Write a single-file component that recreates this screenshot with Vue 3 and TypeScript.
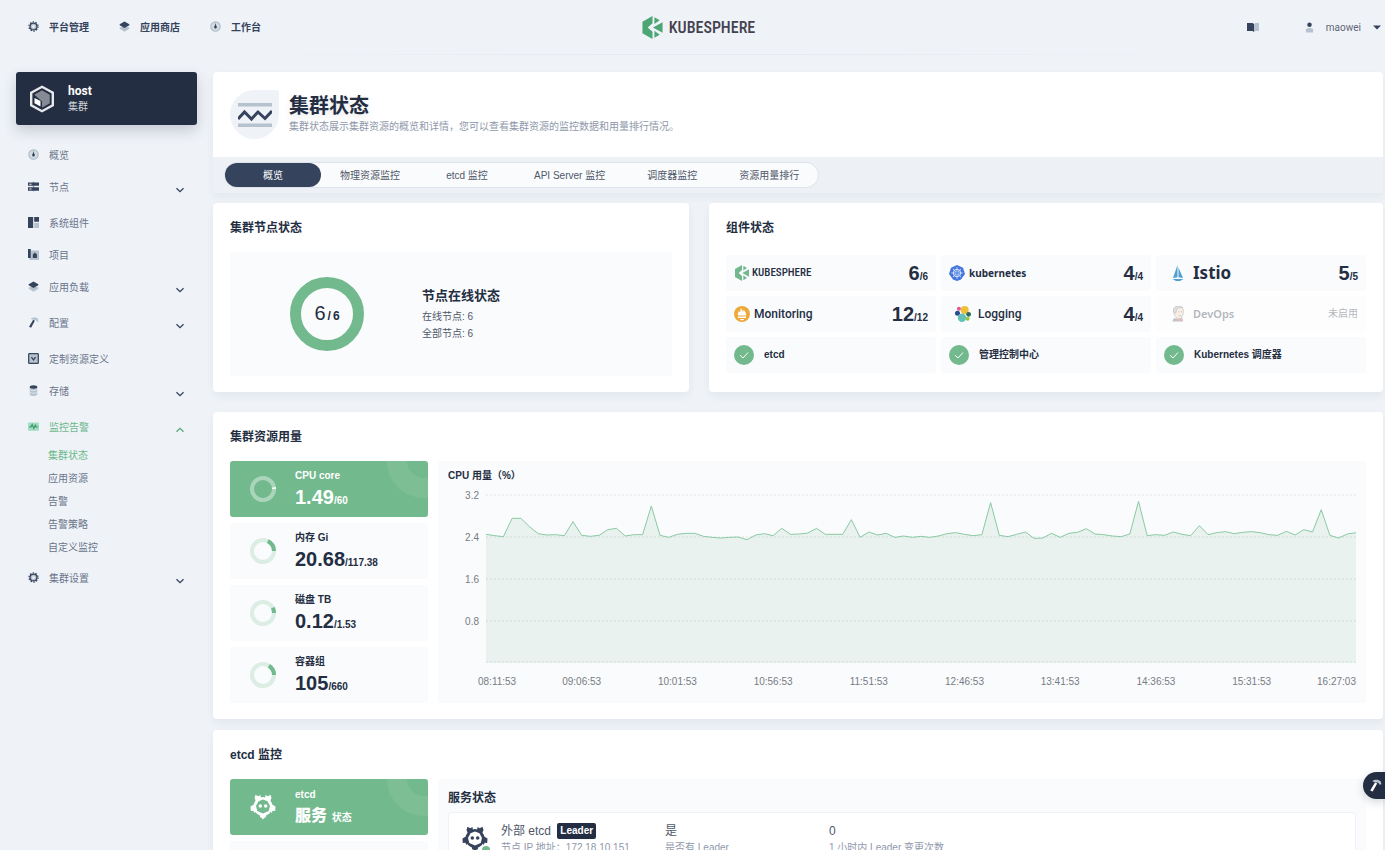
<script setup lang="ts">
interface NavItem {
  label: string
  icon: string
  expandable?: boolean
  active?: boolean
  children?: string[]
}

interface Resource {
  title: string
  value: string
  total: string
  ratio: number
}

interface Tick {
  label: string
  x: string
  anchor: 'start' | 'middle' | 'end'
  dx: number
}

const topNav = [
  { label: '平台管理', icon: 'gear' },
  { label: '应用商店', icon: 'layers' },
  { label: '工作台', icon: 'gauge' },
]

const sideNav: NavItem[] = [
  { label: '概览', icon: 'gauge' },
  { label: '节点', icon: 'nodes', expandable: true },
  { label: '系统组件', icon: 'components' },
  { label: '项目', icon: 'project' },
  { label: '应用负载', icon: 'layers', expandable: true },
  { label: '配置', icon: 'hammer', expandable: true },
  { label: '定制资源定义', icon: 'crd' },
  { label: '存储', icon: 'storage', expandable: true },
  {
    label: '监控告警',
    icon: 'monitor',
    expandable: true,
    active: true,
    children: ['集群状态', '应用资源', '告警', '告警策略', '自定义监控'],
  },
  { label: '集群设置', icon: 'gear', expandable: true },
]

const tabs = ['概览', '物理资源监控', 'etcd 监控', 'API Server 监控', '调度器监控', '资源用量排行']

const services = [
  { key: 'kubesphere', name: 'KUBESPHERE', ready: '6', total: '6' },
  { key: 'kubernetes', name: 'kubernetes', ready: '4', total: '4' },
  { key: 'istio', name: 'Istio', ready: '5', total: '5' },
  { key: 'monitoring', name: 'Monitoring', ready: '12', total: '12' },
  { key: 'logging', name: 'Logging', ready: '4', total: '4' },
  { key: 'devops', name: 'DevOps', ready: '', total: '' },
]

const healthy = ['etcd', '管理控制中心', 'Kubernetes 调度器']

const resources: Resource[] = [
  { title: 'CPU core', value: '1.49', total: '60', ratio: 0.025 },
  { title: '内存 Gi', value: '20.68', total: '117.38', ratio: 0.176 },
  { title: '磁盘 TB', value: '0.12', total: '1.53', ratio: 0.078 },
  { title: '容器组', value: '105', total: '660', ratio: 0.159 },
]

const ringLength = 2 * Math.PI * 11
const ringDash = (ratio: number): string => `${ringLength * ratio} ${ringLength}`

/* Distance of every sample below the top of the plot; the plot is 504 units high. */
const samples: number[] = [
  118, 122, 125, 70, 70, 95, 116, 120, 119, 122, 80, 121, 124, 121, 104, 100, 123, 119, 119, 33,
  121, 127, 118, 115, 115, 124, 127, 129, 127, 126, 134, 120, 116, 122, 100, 118, 117, 114, 100,
  118, 118, 118, 74, 127, 111, 120, 115, 127, 123, 127, 124, 127, 123, 116, 113, 118, 122, 119,
  23, 121, 125, 118, 111, 130, 129, 115, 127, 115, 112, 101, 117, 119, 123, 125, 117, 19, 122,
  119, 121, 111, 118, 122, 92, 119, 113, 110, 116, 112, 110, 113, 119, 121, 109, 120, 104, 111,
  44, 121, 129, 117, 113,
]
const linePoints = samples.map((y, i) => `${i},${y}`).join(' ')
const areaPoints = `0,504 ${linePoints} 100,504`

const yTicks = [
  { label: '3.2', y: 1 },
  { label: '2.4', y: 43 },
  { label: '1.6', y: 85 },
  { label: '0.8', y: 127 },
  { label: '', y: 168 },
]

const xTicks: Tick[] = [
  { label: '08:11:53', x: '0%', anchor: 'start', dx: -8 },
  ...['09:06:53', '10:01:53', '10:56:53', '11:51:53', '12:46:53', '13:41:53', '14:36:53', '15:31:53'].map(
    (label, i): Tick => ({ label, x: `${(i + 1) * 11}%`, anchor: 'middle', dx: 0 }),
  ),
  { label: '16:27:03', x: '100%', anchor: 'end', dx: 0 },
]
</script>

<template>
  <svg class="defs" aria-hidden="true">
    <symbol id="gear" viewBox="0 0 16 16">
      <circle cx="8" cy="8" r="5" fill="#b6c2cd" stroke="#36435c" stroke-width="1.8" />
      <circle cx="8" cy="8" r="6.6" fill="none" stroke="#36435c" stroke-width="1.8" stroke-dasharray="2.1 2.047" />
      <circle cx="8" cy="8" r="2" fill="#eff4f9" />
    </symbol>
    <symbol id="layers" viewBox="0 0 16 16">
      <path d="M1 9.5l7-2 7 2v1.800L8 15.500l-7-4.200z" fill="#b6c2cd" />
      <path d="M8 .8l7 3.800v1.600L8 10 1 6.200V4.600z" fill="#36435c" />
    </symbol>
    <symbol id="gauge" viewBox="0 0 16 16">
      <circle cx="8" cy="8" r="6.8" fill="#d3dbe3" stroke="#b0bbc8" stroke-width="1.6" />
      <path d="M8 3l1 4a2 2 0 1 1-2 0z" fill="#36435c" />
    </symbol>
    <symbol id="nodes" viewBox="0 0 16 16">
      <path d="M7 1h2v14H7z" fill="#8b98a8" />
      <path d="M0 2h16v5H0zM0 9h16v5H0z" fill="#36435c" />
      <path d="M2 4h3v1.300H2zM2 11h3v1.300H2z" fill="#eff4f9" />
    </symbol>
    <symbol id="components" viewBox="0 0 16 16">
      <path d="M0 0h7.500v16H0zM9 0h7v7H9z" fill="#36435c" />
      <path d="M9 8.500h7V16H9z" fill="#b6c2cd" />
    </symbol>
    <symbol id="project" viewBox="0 0 16 16">
      <path d="M4 2h12v14H2z" fill="#b6c2cd" />
      <path d="M0 0h4v13H0zM7 8l3-3 3 3v5H7z" fill="#36435c" />
    </symbol>
    <symbol id="hammer" viewBox="0 0 16 16">
      <path d="M7.500 4L10 5.500 4.500 15.500 1.500 14z" fill="#36435c" />
      <path d="M4 2.500C7 .2 12 .3 14.500 3l.8 3.500-2 .5-2-2.500L6 3.800z" fill="#b6c2cd" />
    </symbol>
    <symbol id="crd" viewBox="0 0 16 16">
      <rect x="1" y="1" width="14" height="14" rx="1" fill="#b6c2cd" stroke="#36435c" stroke-width="1.8" />
      <path d="M5 6l3 4 3-4" fill="none" stroke="#36435c" stroke-width="1.8" />
    </symbol>
    <symbol id="storage" viewBox="0 0 16 16">
      <path d="M2.500 3h11v10.500c0 3.300-11 3.300-11 0z" fill="#b6c2cd" />
      <path d="M2.500 6.500c2 2 9 2 11 0M2.500 10.500c2 2 9 2 11 0" fill="none" stroke="#eff4f9" />
      <ellipse cx="8" cy="2.8" rx="5.5" ry="2.5" fill="#36435c" />
    </symbol>
    <symbol id="monitor" viewBox="0 0 16 16">
      <rect y="2" width="16" height="12" rx="1" fill="#a2dcc2" />
      <path d="M2 8.500h2.500L6 5l2.500 6L10.500 6l1.200 2.500H14" fill="none" stroke="#37986a" stroke-width="1.6" />
    </symbol>
    <symbol id="chevron" viewBox="0 0 10 10">
      <path d="M1.500 3.200L5 6.700l3.500-3.500" fill="none" stroke="currentColor" stroke-width="1.3" />
    </symbol>
    <symbol id="kubesphere" viewBox="0 0 21 24">
      <path d="M0 6L10.500 0v7.500L5.500 12l5 4.500V24L0 18z" fill="currentColor" />
      <path d="M12.500 1.200L18 4.400l-5.500 4zM21 6.500v11l-10-5.500zM12.500 15.500l5.500 4-5.500 3.300z" fill="currentColor" />
    </symbol>
    <symbol id="kubernetes" viewBox="0 0 16 16">
      <path d="M8 0l6 2.800L16 9l-4 5.500L8 16l-4-1.500L0 9l2-6.200z" fill="#4576e0" />
      <g fill="none" stroke="#dce7ff" stroke-width="1">
        <circle cx="8" cy="8" r="3.7" />
        <path d="M8 2.200v11.600M2.200 8h11.600M3.900 3.900l8.200 8.200M12.100 3.900l-8.200 8.200" stroke-width=".8" />
      </g>
      <circle cx="8" cy="8" r="1" fill="#4576e0" />
    </symbol>
    <symbol id="istio" viewBox="0 0 16 16">
      <path d="M7.500 0v12.200L3 13zM8.500 2.500l4.500 10.500-4.500-.8z" fill="#4f9fd0" />
      <path d="M2.500 14h11L10 16H6z" fill="#4f9fd0" />
    </symbol>
    <symbol id="monitoring" viewBox="0 0 16 16">
      <circle cx="8" cy="8" r="8" fill="#eda93c" />
      <path d="M4 9.500c-.8-2 .7-3 .8-4.500L6 6.300c.8-1.500.6-3 .6-4.300C8 3 8.300 5 9 6c.5-.6.4-1.500.5-2.200C11 5.500 12.800 7.500 12 9.500zM4 10.500h8V12H4zM6 12.900h4c-.2 1.800-3.800 1.800-4 0z" fill="#fff" />
    </symbol>
    <symbol id="logging" viewBox="0 0 16 16">
      <circle cx="9.7" cy="4" r="4" fill="#efbf38" />
      <circle cx="3.9" cy="2.8" r="2" fill="#e4578f" />
      <circle cx="2.5" cy="7.2" r="2.5" fill="#294a91" />
      <circle cx="7" cy="11.8" r="4.2" fill="#65c0b6" />
      <circle cx="13.6" cy="8.3" r="2.4" fill="#286b5b" />
      <circle cx="12.6" cy="12.8" r="2" fill="#92c83e" />
    </symbol>
    <symbol id="devops" viewBox="0 0 16 18">
      <path d="M3 6c0-8 11-8 11-.5 0 3-.5 6.500-3 8.500H7L4 10z" fill="#f0d6b7" stroke="#34383b" stroke-width=".7" />
      <path d="M3.500 7C1 0 11-2 13 2c-3 0-5 0-6 1L5.500 8z" fill="#aaa" stroke="#34383b" stroke-width=".6" />
      <path d="M1.500 17.500l2-4 5 1.500 4-1.500 1.500 4z" fill="#475a77" />
      <path d="M6.500 14l3 1.500L13 14v3l-3-1-3.500 1z" fill="#d33833" />
      <path d="M8 6.500h1.500M11.200 6.500h1.300M8.500 10.500c1 1 2.500 1 3 0" stroke="#34383b" stroke-width=".8" fill="none" />
    </symbol>
    <symbol id="etcd" viewBox="0 0 26 26">
      <g fill="currentColor">
        <path
          fill-rule="evenodd"
          d="M13 3a9.500 9.500 0 0 1 9.500 9.500A9.500 9.500 0 0 1 13 22a9.500 9.500 0 0 1-9.500-9.500A9.500 9.500 0 0 1 13 3zM13 5.500l-4.500 1.800L6 12l1.300 5L13 19.500l5.700-2.500L20 12l-2.500-4.700z"
        />
        <path d="M5.500.8l2.700 1.400L10.500 1 11 5 6 7.500 4.500 4zM20.500.8l-2.700 1.400L15.500 1 15 5l5 2.500L21.500 4z" />
        <path d="M3.800 10.500L.5 12.500.8 17l2.500-.3L4.500 19l2-3zM22.200 10.500l3.300 2-.3 4.500-2.500-.3-1.200 2.300-2-3z" />
        <path d="M9.500 20h7l-.8 3.500h-1L13 25.500l-1.700-2h-1z" />
        <circle cx="10.300" cy="12" r="1.8" />
        <circle cx="15.700" cy="12" r="1.8" />
      </g>
    </symbol>
  </svg>

  <div class="page">
    <header class="topbar">
      <nav class="top-nav">
        <a v-for="item in topNav" :key="item.label" href="#" class="top-link">
          <svg class="icon"><use :href="'#' + item.icon" /></svg>{{ item.label }}
        </a>
      </nav>
      <a href="#" class="brand">
        <svg class="brand-mark"><use href="#kubesphere" /></svg>
        <span>KUBESPHERE</span>
      </a>
      <div class="account">
        <button type="button" class="plain" aria-label="文档">
          <svg class="book" viewBox="0 0 12 9">
            <path d="M0 0h5.500L7 1v8L5.500 8H0z" fill="#36435c" />
            <path d="M7 1l1.500-1H12v8H8.500L7 9z" fill="#b6c2cd" />
          </svg>
        </button>
        <button type="button" class="plain user">
          <svg class="avatar" viewBox="0 0 10 12">
            <path d="M1 8c2-2 6-2 8 0v3.500H1z" fill="#b6c2cd" />
            <circle cx="5" cy="3" r="2.5" fill="#36435c" />
          </svg>
          maowei
          <svg class="caret" viewBox="0 0 8 5"><path d="M0 .5h8L4 4.500z" fill="#36435c" /></svg>
        </button>
      </div>
    </header>

    <div class="body">
      <aside class="sidebar">
        <button type="button" class="cluster">
          <svg class="cube" viewBox="0 0 26 28">
            <path d="M13 1.800l10.800 6v12.400L13 26.200 2.200 20.200V7.800z" fill="#242e42" stroke="#e6e8ec" stroke-width="2.4" />
            <path d="M13 5.500l7.500 4.200v8.600L13 22.500v-6L5.500 9.700z" fill="#868a94" />
            <path d="M5.500 9.700L13 5.500l7.500 4.200v8.600L13 22.500V15z" fill="#868a94" />
            <path d="M5.500 13l6 3v5.500l-6-3.200z" fill="#fff" />
          </svg>
          <span class="cluster-text"><strong>host</strong><span>集群</span></span>
        </button>
        <nav class="side-nav">
          <div v-for="item in sideNav" :key="item.label" class="group" :class="{ expandable: item.expandable }">
            <a href="#" class="side-link" :class="{ active: item.active }">
              <svg class="icon"><use :href="'#' + item.icon" /></svg>
              <span>{{ item.label }}</span>
              <svg v-if="item.expandable" class="chevron" :class="{ open: item.active }"><use href="#chevron" /></svg>
            </a>
            <div v-if="item.children" class="sub-nav">
              <a v-for="(child, i) in item.children" :key="child" href="#" :class="{ active: i === 0 }">{{ child }}</a>
            </div>
          </div>
        </nav>
      </aside>

      <main class="main">
        <section class="intro">
          <div class="intro-head">
            <div class="badge-icon">
              <svg viewBox="0 0 34 24">
                <path d="M0 0h34v3.500H0zM0 20.500h34V24H0z" fill="#b6c2cd" />
                <path d="M0 16l6.500-7 7 7L20 9l7 6.500L34 8" fill="none" stroke="#36435c" stroke-width="3" />
              </svg>
            </div>
            <div class="intro-text">
              <h1>集群状态</h1>
              <p>集群状态展示集群资源的概览和详情，您可以查看集群资源的监控数据和用量排行情况。</p>
            </div>
          </div>
          <div class="tab-bar">
            <div class="tabs" role="tablist">
              <button v-for="(tab, i) in tabs" :key="tab" type="button" role="tab" :aria-selected="i === 0">{{ tab }}</button>
            </div>
          </div>
        </section>

        <div class="status-row">
          <section class="card">
            <h2>集群节点状态</h2>
            <div class="node-box">
              <div class="donut"><span>6</span><b>/</b><b>6</b></div>
              <div class="node-text">
                <h3>节点在线状态</h3>
                <p>在线节点: 6</p>
                <p>全部节点: 6</p>
              </div>
            </div>
          </section>

          <section class="card">
            <h2>组件状态</h2>
            <div class="services">
              <a v-for="s in services" :key="s.key" href="#" class="service" :class="s.key">
                <svg class="service-icon"><use :href="'#' + s.key" /></svg>
                <span class="service-name">{{ s.name }}</span>
                <span v-if="s.ready" class="count"><b>{{ s.ready }}</b>/{{ s.total }}</span>
                <span v-else class="disabled">未启用</span>
              </a>
              <div v-for="name in healthy" :key="name" class="service health">
                <svg class="check" viewBox="0 0 20 20">
                  <circle cx="10" cy="10" r="10" fill="#72b98d" />
                  <path d="M6 10.200l3 2.800 5-5.500" fill="none" stroke="#fff" />
                </svg>
                <span>{{ name }}</span>
              </div>
            </div>
          </section>
        </div>

        <section class="card usage-card">
          <h2>集群资源用量</h2>
          <div class="split">
            <div class="metrics">
              <button v-for="(r, i) in resources" :key="r.title" type="button" class="metric" :class="{ selected: i === 0 }">
                <svg v-if="i === 0" class="deco" viewBox="0 0 42 37"><circle cx="38" cy="0" r="27" /></svg>
                <svg class="ring" viewBox="0 0 26 26">
                  <circle cx="13" cy="13" r="11" class="track" />
                  <circle cx="13" cy="13" r="11" class="value" :stroke-dasharray="ringDash(r.ratio)" transform="matrix(1 0 0 -1 0 26)" />
                </svg>
                <span class="metric-text">
                  <strong>{{ r.title }}</strong>
                  <span class="figure"><b>{{ r.value }}</b>/{{ r.total }}</span>
                </span>
              </button>
            </div>
            <div class="panel">
              <h3>CPU 用量（%）</h3>
              <svg class="chart" role="img" aria-label="CPU 用量">
                <line v-for="t in yTicks" :key="t.y" x1="0" x2="100%" :y1="t.y" :y2="t.y" class="grid-line" />
                <svg y="1" width="100%" height="168" viewBox="0 0 100 504" preserveAspectRatio="none">
                  <polygon :points="areaPoints" class="area" />
                  <polyline :points="linePoints" class="line" />
                </svg>
                <text v-for="t in yTicks" :key="'y' + t.y" x="-7" :y="t.y + 4" text-anchor="end">{{ t.label }}</text>
                <text v-for="t in xTicks" :key="t.label" :x="t.x" :dx="t.dx" y="191" :text-anchor="t.anchor">{{ t.label }}</text>
              </svg>
            </div>
          </div>
        </section>

        <section class="card">
          <h2>etcd 监控</h2>
          <div class="split">
            <div class="metrics">
              <button type="button" class="metric selected">
                <svg class="deco" viewBox="0 0 42 37"><circle cx="38" cy="0" r="27" /></svg>
                <svg class="ring"><use href="#etcd" /></svg>
                <span class="metric-text">
                  <strong>etcd</strong>
                  <span class="figure"><b class="zh">服务</b> 状态</span>
                </span>
              </button>
              <button type="button" class="metric" aria-label="etcd 监控"></button>
            </div>
            <div class="panel etcd-panel">
              <h3>服务状态</h3>
              <div class="member">
                <div class="member-icon">
                  <svg><use href="#etcd" /></svg>
                  <i></i>
                </div>
                <div class="member-name">
                  <p class="lead">外部 etcd <mark>Leader</mark></p>
                  <p class="note">节点 IP 地址：172.18.10.151</p>
                </div>
                <div class="member-leader">
                  <p class="lead">是</p>
                  <p class="note">是否有 Leader</p>
                </div>
                <div>
                  <p class="lead">0</p>
                  <p class="note">1 小时内 Leader 变更次数</p>
                </div>
              </div>
            </div>
          </div>
        </section>
      </main>
    </div>

    <button type="button" class="toolbox" aria-label="工具箱">
      <svg viewBox="0 0 16 16">
        <path d="M7.500 4L10 5.500 4.500 15.500 1.500 14z" fill="#fff" />
        <path d="M4 2.500C7 .2 12 .3 14.500 3l.8 3.500-2 .5-2-2.500L6 3.800z" fill="#b6c2cd" />
      </svg>
    </button>
  </div>
</template>

<style>
html,
body {
  margin: 0;
  background: #fff;
}
</style>

<style scoped>
* {
  box-sizing: border-box;
}
h1, h2, h3, p {
  margin: 0;
}
a {
  color: inherit;
  text-decoration: none;
}
button {
  margin: 0;
  padding: 0;
  border: 0;
  background: none;
  color: inherit;
  font: inherit;
  text-align: left;
}
svg {
  display: block;
  flex: none;
}
.defs {
  position: absolute;
  width: 0;
  height: 0;
}
.page {
  position: relative;
  height: calc(100vh - 2px);
  margin-right: 5px;
  overflow: hidden;
  background: #eff3f8;
  color: #242e42;
  font: 10px/16px "Liberation Sans", "Noto Sans CJK SC", sans-serif;
}
.topbar {
  display: grid;
  grid-template-columns: 1fr auto 1fr;
  align-items: center;
  height: 55px;
  padding: 1px 4px 0 16px;
  border-bottom: 1px solid;
  border-image: linear-gradient(90deg, #eff3f8 15%, #e5e9ef 50%, #eff3f8 90%) 1;
}
.top-nav {
  display: flex;
  gap: 30px;
  padding: 1px 0 0 12px;
}
.top-link {
  display: flex;
  align-items: center;
  gap: 10px;
  color: #36435c;
  font-weight: 700;
}
.icon {
  width: 11px;
  height: 11px;
  margin-bottom: 3px;
}
.brand {
  display: flex;
  align-items: center;
  gap: 6px;
  color: #45424f;
  font: 500 16px/24px "Roboto Condensed", Roboto, sans-serif;
}
.brand-mark {
  width: 21px;
  height: 23px;
  color: #4ca674;
}
.account {
  display: flex;
  justify-content: flex-end;
  align-items: center;
  gap: 46px;
}
.book {
  width: 12px;
  height: 9px;
}
.user {
  display: flex;
  align-items: center;
  color: #5f6577;
  font-family: Roboto, sans-serif;
}
.avatar {
  width: 9px;
  height: 11px;
  margin-right: 12px;
}
.caret {
  width: 8px;
  height: 5px;
  margin-left: 12px;
}
.body {
  display: flex;
  gap: 16px;
  padding: 17px 2px 0 16px;
}
.sidebar {
  flex: none;
  width: 181px;
}
.cluster {
  display: flex;
  align-items: center;
  gap: 13px;
  width: 100%;
  height: 53px;
  padding: 0 13px;
  border-radius: 3px;
  background: #242e42;
  box-shadow: 0 6px 14px rgba(36, 46, 66, 0.2);
  color: #fff;
}
.cube {
  width: 26px;
  height: 28px;
}
.cluster-text {
  display: flex;
  flex-direction: column;
  color: #d0d4da;
}
.cluster-text strong {
  color: #fff;
  font: 700 12px/16px Roboto, sans-serif;
}
.side-nav {
  padding: 15px 12px 0;
}
.group.expandable {
  padding-bottom: 4px;
}
.side-link {
  display: flex;
  align-items: center;
  height: 32px;
  gap: 10px;
  color: #6a738a;
}
.side-link.active,
.sub-nav .active {
  color: #6cb88b;
}
.chevron {
  width: 10px;
  height: 10px;
  margin: 3px 0 0 auto;
  color: #36435c;
}
.chevron.open {
  color: #55aa7c;
  transform: rotate(180deg);
}
.sub-nav {
  display: flex;
  flex-direction: column;
  padding-left: 20px;
  color: #6a738a;
  line-height: 23px;
}
.main {
  flex: 1;
  min-width: 0;
}
.intro,
.card {
  border-radius: 4px;
  background: #fff;
  box-shadow: 0 4px 8px rgba(36, 46, 66, 0.06);
}
.intro {
  margin-bottom: 10px;
  overflow: hidden;
}
.intro-head {
  display: flex;
  align-items: center;
  gap: 10px;
  height: 85px;
  padding: 0 17px;
}
.badge-icon {
  display: grid;
  place-items: center;
  width: 49px;
  height: 49px;
  border-radius: 50% 2px 50% 50%;
  background: #eff3f8;
}
.badge-icon svg {
  width: 34px;
  height: 24px;
}
.intro-text {
  padding-bottom: 2px;
}
h1 {
  font-size: 20px;
  line-height: 26px;
  text-shadow: 0 4px 8px rgba(36, 46, 66, 0.1);
}
.intro-head p {
  color: #8f98ab;
}
.tab-bar {
  display: flex;
  padding: 5px 11px;
  background: #edf1f6;
}
.tabs {
  display: flex;
  height: 26px;
  border: 1px solid #dde3ea;
  border-radius: 13px;
  background: #fafbfd;
}
.tabs button {
  min-width: 96px;
  padding: 2px 19px 0;
  border-radius: 12px;
  color: #4f5769;
  text-align: center;
}
.tabs button[aria-selected="true"] {
  background: #36435c;
  color: #fff;
}
.status-row {
  display: grid;
  grid-template-columns: 476fr 674fr;
  gap: 20px;
  margin-bottom: 20px;
}
.card {
  padding: 17px 17px 16px;
}
h2 {
  margin-bottom: 15px;
  font-size: 12px;
  line-height: 17px;
}
.node-box {
  display: flex;
  align-items: center;
  height: 124px;
  padding-left: 60px;
  border-radius: 3px;
  background: #fafbfd;
}
.donut {
  display: flex;
  justify-content: center;
  align-items: baseline;
  gap: 2px;
  width: 74px;
  height: 74px;
  margin-right: 58px;
  border: 11px solid #72b98d;
  border-radius: 50%;
  font-size: 12px;
  line-height: 50px;
}
.donut span {
  font-size: 20px;
}
.node-text {
  color: #4f5769;
  line-height: 17px;
}
.node-text h3 {
  margin-bottom: 4px;
  color: #242e42;
  font-size: 13px;
  line-height: 17px;
}
.services {
  display: grid;
  grid-template-columns: repeat(3, 1fr);
  gap: 5px;
  padding-top: 3px;
}
.service {
  display: flex;
  align-items: center;
  height: 36px;
  padding: 0 8px;
  border-radius: 3px;
  background: #fafbfd;
  font-weight: 700;
}
.service-icon {
  width: 16px;
  height: 16px;
  margin-right: 4px;
  color: #72b98d;
}
.service-name {
  font: 500 12px/16px Roboto, sans-serif;
}
.kubesphere .service-icon {
  margin-right: 2px;
}
.kubesphere .service-name {
  font: 500 11px/16px "Roboto Condensed", Roboto, sans-serif;
}
.kubernetes .service-name {
  font: 700 10px/16px "Noto Sans", sans-serif;
}
.istio .service-icon,
.logging .service-icon,
.devops .service-icon {
  margin: 0 7px 0 6px;
}
.istio .service-name {
  font: 700 17px/16px "Noto Sans", sans-serif;
}
.devops {
  opacity: 0.35;
}
.devops .service-name {
  font: 600 11px/16px "Noto Sans", sans-serif;
}
.disabled {
  margin-left: auto;
  font-weight: 400;
}
.count {
  margin-left: auto;
  padding-top: 3px;
}
.count b {
  font-size: 20px;
}
.health {
  gap: 10px;
}
.check {
  width: 20px;
  height: 20px;
}
.usage-card {
  margin-bottom: 11px;
}
.split {
  display: flex;
  gap: 10px;
}
.metrics {
  display: flex;
  flex: none;
  flex-direction: column;
  gap: 6px;
  width: 198px;
}
.metric {
  position: relative;
  display: flex;
  align-items: center;
  gap: 19px;
  height: 56px;
  padding-left: 20px;
  border-radius: 3px;
  background: #fafbfd;
}
.selected {
  background: #72b98d;
  color: #fff;
}
.deco {
  position: absolute;
  top: 0;
  right: 0;
  width: 42px;
  height: 37px;
}
.deco circle {
  fill: none;
  stroke: #fff;
  stroke-opacity: 0.08;
  stroke-width: 20;
}
.ring {
  width: 26px;
  height: 26px;
}
.ring circle {
  fill: none;
  stroke: #72b98d;
  stroke-width: 4;
}
.ring .track {
  stroke-opacity: 0.22;
}
.selected .ring circle {
  stroke: #fff;
}
.selected .ring .track {
  stroke-opacity: 0.4;
}
.metric-text {
  display: flex;
  flex-direction: column;
  padding-top: 3px;
}
.figure {
  font-weight: 700;
  line-height: 26px;
}
.figure b {
  font-size: 20px;
}
.figure .zh {
  margin-right: 2px;
  font-size: 16px;
}
.panel {
  flex: 1;
  min-width: 0;
  padding: 7px 10px 0;
  border-radius: 3px;
  background: #fafbfd;
}
.panel h3 {
  font-size: 10px;
  line-height: 16px;
}
.chart {
  width: calc(100% - 38px);
  height: 200px;
  margin: 10px 0 0 38px;
  overflow: visible;
}
.chart text {
  fill: #777b83;
  font-size: 10px;
}
.grid-line {
  stroke: #dfe4e6;
  stroke-dasharray: 2 2;
}
.area {
  fill: rgba(114, 185, 141, 0.12);
}
.line {
  fill: none;
  stroke: #8acaa3;
  stroke-width: 1;
  vector-effect: non-scaling-stroke;
}
.etcd-panel {
  padding-top: 11px;
}
.etcd-panel h3 {
  margin-bottom: 6px;
  font-size: 12px;
}
.member {
  display: flex;
  height: 60px;
  padding: 10px 13px;
  border: 1px solid #eff2f6;
  border-radius: 3px;
  background: #fff;
}
.member-icon {
  position: relative;
  width: 26px;
  height: 26px;
  margin: 3px 13px 0 0;
  color: #36435c;
}
.member-icon svg {
  width: 26px;
  height: 26px;
}
.member-icon i {
  position: absolute;
  right: -2px;
  bottom: -2px;
  width: 8px;
  height: 8px;
  border-radius: 50%;
  background: #72b98d;
}
.member-name,
.member-leader {
  width: 164px;
}
.lead {
  color: #4f5769;
  font-size: 12px;
  line-height: 17px;
}
.lead mark {
  display: inline-block;
  margin-left: 3px;
  padding: 0 3px;
  border-radius: 2px;
  background: #242e42;
  color: #fff;
  font-size: 10px;
  font-weight: 700;
  line-height: 16px;
  vertical-align: top;
}
.note {
  color: #8f98ab;
}
.toolbox {
  position: absolute;
  top: 772px;
  right: 0;
  display: flex;
  align-items: center;
  width: 22px;
  height: 27px;
  padding-left: 6px;
  border-radius: 14px 0 0 14px;
  background: #242e42;
  box-shadow: 0 3px 8px rgba(36, 46, 66, 0.2);
}
.toolbox svg {
  width: 13px;
  height: 13px;
}
</style>
